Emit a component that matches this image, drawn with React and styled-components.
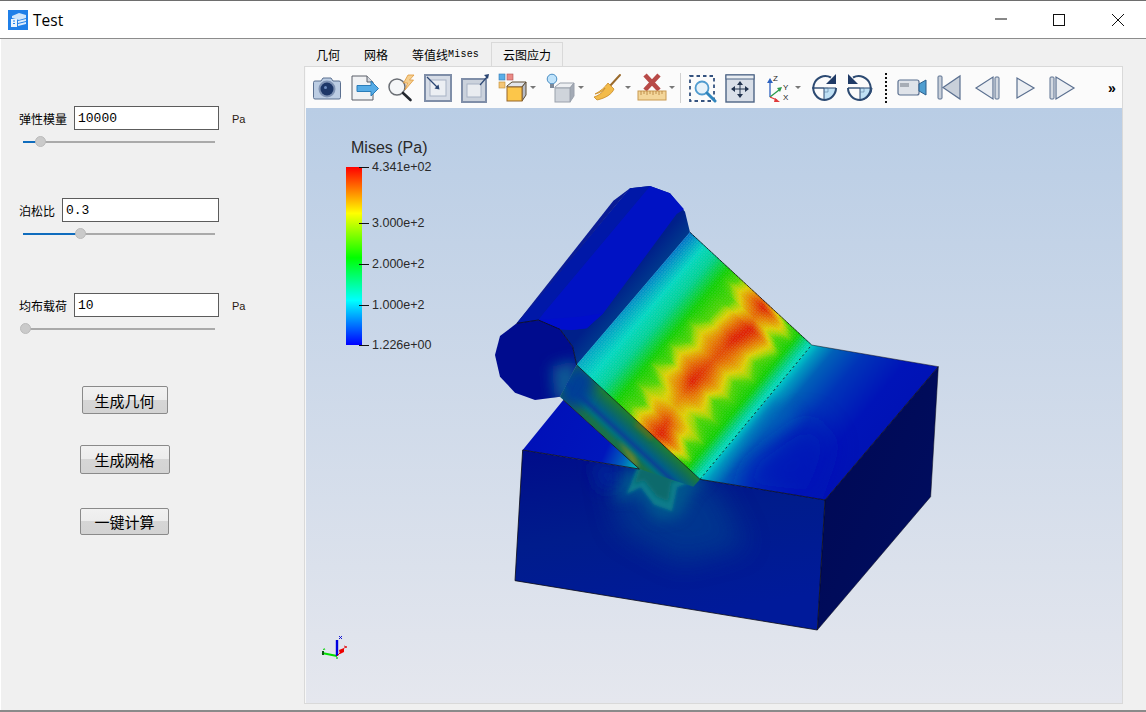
import React from "react";
import styled, { createGlobalStyle } from "styled-components";

const GlobalStyle = createGlobalStyle`
  html, body { margin: 0; padding: 0; background: #f0f0f0; }
  * { box-sizing: border-box; }
`;

const CJK = `"Noto Sans CJK SC", "Liberation Sans", sans-serif`;
const MONO = `"Liberation Mono", "Noto Sans CJK SC", monospace`;

/* colormap + interpolation for the stress field */
const interp = (table, x) => {
  for (let i = 1; i < table.length; i++) {
    if (x <= table[i][0]) {
      const f = (x - table[i - 1][0]) / (table[i][0] - table[i - 1][0]);
      return table[i - 1][1] + f * (table[i][1] - table[i - 1][1]);
    }
  }
  return table[table.length - 1][1];
};

const COLORS = [
  [0, [0, 16, 192]],
  [0.14, [0, 112, 200]],
  [0.27, [0, 216, 192]],
  [0.36, [0, 208, 128]],
  [0.5, [16, 208, 0]],
  [0.62, [144, 216, 0]],
  [0.72, [224, 208, 0]],
  [0.85, [232, 128, 0]],
  [1, [224, 32, 0]],
];

const colorAt = (t) => {
  for (let i = 1; i < COLORS.length; i++) {
    if (t <= COLORS[i][0]) {
      const f = (t - COLORS[i - 1][0]) / (COLORS[i][0] - COLORS[i - 1][0]);
      const a = COLORS[i - 1][1];
      const b = COLORS[i][1];
      return `rgb(${a.map((c, k) => Math.round(c + f * (b[k] - c))).join(",")})`;
    }
  }
  return "rgb(224,32,0)";
};

const PEAK = [[0, 0.88], [0.03, 1], [0.08, 0.9], [0.12, 0.86], [0.17, 1], [0.28, 1], [0.36, 0.94], [0.45, 0.92], [0.55, 0.97], [0.62, 1], [0.72, 0.86], [0.8, 0.78], [0.88, 0.94], [0.96, 1], [1, 0.94]];
const CENTER = [[0, 0.6], [0.03, 0.63], [0.1, 0.62], [0.16, 0.66], [0.28, 0.62], [0.4, 0.61], [0.6, 0.59], [0.75, 0.6], [0.85, 0.62], [0.96, 0.65], [1, 0.63]];
const WIDTH = [[0, 0.19], [0.06, 0.25], [0.12, 0.17], [0.18, 0.22], [0.3, 0.19], [0.38, 0.25], [0.46, 0.18], [0.55, 0.24], [0.62, 0.17], [0.7, 0.25], [0.76, 0.16], [0.84, 0.25], [0.9, 0.17], [0.96, 0.24], [1, 0.2]];

const field = (u, v) => {
  const c = interp(CENTER, v);
  const w = interp(WIDTH, v);
  const pk = interp(PEAK, v);
  const d = Math.abs(u - c);
  if (d < w) return pk - Math.pow(d / w, 1.3) * (pk - 0.56);
  if (u < c) {
    return interp([[0, 0.14 + 0.07 * v], [0.13, 0.28], [0.2, 0.33], [0.32, 0.5], [c - w, 0.56]], u);
  }
  return interp([[c + w, 0.56], [Math.max(0.9, c + w + 0.01), 0.5], [0.98, 0.3], [1.01, 0.26]], u);
};

const A = [630, 187];
const B = [995, 525];
const C = [660, 928];
const D = [290, 585];
const slopePoint = (u, v) =>
  [0, 1].map((k) => (A[k] * (1 - u) + B[k] * u) * (1 - v) + (D[k] * (1 - u) + C[k] * u) * v);

const N = 72;
const slopeCells = [];
for (let i = 0; i < N; i++) {
  for (let j = 0; j < N; j++) {
    const pts = [[i, j], [i + 1, j], [i + 1, j + 1], [i, j + 1]]
      .map(([a, b]) => slopePoint(a / N, b / N).map((n) => n.toFixed(1)).join(","))
      .join(" ");
    slopeCells.push({ pts, fill: colorAt(field((i + 0.5) / N, (j + 0.5) / N)) });
  }
}

const Model = () => (
  <ModelSvg viewBox="0 0 1440 1410">
    <defs>
      <filter id="b4" x="-20%" y="-20%" width="140%" height="140%"><feGaussianBlur stdDeviation="4" /></filter>
      <filter id="b6" x="-30%" y="-30%" width="160%" height="160%"><feGaussianBlur stdDeviation="6" /></filter>
      <filter id="b20" x="-50%" y="-50%" width="200%" height="200%"><feGaussianBlur stdDeviation="20" /></filter>
      <filter id="b40" x="-60%" y="-60%" width="220%" height="220%"><feGaussianBlur stdDeviation="40" /></filter>
      <clipPath id="frontClip"><polygon points="128,840 478,897 660,928 1035,990 1012,1380 105,1232" /></clipPath>
      <clipPath id="topClip"><polygon points="660,928 1035,990 1375,590 995,525" /></clipPath>
      <clipPath id="wedgeClip"><polygon points="240,680 290,585 660,928 640,950 478,897" /></clipPath>
      <clipPath id="discClip"><polygon points="60,498 45,555 60,620 105,668 165,690 240,680 290,585 278,530 240,478 175,450 110,460" /></clipPath>
      <linearGradient id="frontFill" x1="0" y1="0" x2="0.3" y2="1">
        <stop offset="0" stopColor="#000c8a" />
        <stop offset="0.5" stopColor="#001c8c" />
        <stop offset="1" stopColor="#001a9a" />
      </linearGradient>
      <linearGradient id="sideFill" x1="0" y1="0" x2="1" y2="1">
        <stop offset="0" stopColor="#000852" />
        <stop offset="1" stopColor="#000e62" />
      </linearGradient>
      <linearGradient id="topFill" gradientUnits="userSpaceOnUse" x1="825" y1="728" x2="1120" y2="975">
        <stop offset="0" stopColor="#00c8c8" />
        <stop offset="0.06" stopColor="#0098c0" />
        <stop offset="0.16" stopColor="#0060b8" />
        <stop offset="0.36" stopColor="#0034b8" />
        <stop offset="0.65" stopColor="#0014b8" />
        <stop offset="1" stopColor="#0012b4" />
      </linearGradient>
      <linearGradient id="stripFill" gradientUnits="userSpaceOnUse" x1="420" y1="350" x2="470" y2="392">
        <stop offset="0" stopColor="#00208a" />
        <stop offset="1" stopColor="#003e8e" />
      </linearGradient>
      <linearGradient id="wedgeFill" gradientUnits="userSpaceOnUse" x1="252" y1="690" x2="319" y2="617">
        <stop offset="0" stopColor="#14704e" />
        <stop offset="0.12" stopColor="#1a7248" />
        <stop offset="0.28" stopColor="#00707c" />
        <stop offset="0.42" stopColor="#0a4494" />
        <stop offset="0.55" stopColor="#005e88" />
        <stop offset="0.8" stopColor="#106e58" />
        <stop offset="1" stopColor="#1e7c34" />
      </linearGradient>
      <linearGradient id="triFill" gradientUnits="userSpaceOnUse" x1="160" y1="760" x2="470" y2="900">
        <stop offset="0" stopColor="#0010b8" />
        <stop offset="0.68" stopColor="#0016bc" />
        <stop offset="0.86" stopColor="#0064bc" />
        <stop offset="1" stopColor="#00c0b0" />
      </linearGradient>
    </defs>

    {/* box */}
    <polygon points="128,840 1035,990 1012,1380 105,1232" fill="url(#frontFill)" />
    <polygon points="1035,990 1375,590 1352,980 1012,1380" fill="url(#sideFill)" />
    <polygon points="660,928 1035,990 1375,590 995,525" fill="url(#topFill)" />
    <g clipPath="url(#topClip)">
      <polygon points="900,640 990,740 820,860 760,960 1000,990 1060,820" fill="#0018b8" filter="url(#b40)" opacity="0.75" />
      <polygon points="880,680 960,740 800,830 740,900" fill="#0060b8" filter="url(#b20)" opacity="0.55" />
    </g>
    <polygon points="128,840 250,690 478,897" fill="url(#triFill)" />

    <g clipPath="url(#frontClip)">
      <polygon points="380,900 700,930 800,1130 600,1180 420,1080" fill="#004090" filter="url(#b40)" opacity="0.7" />
      <polygon points="330,880 420,890 420,950 360,960" fill="#002498" filter="url(#b20)" />
      <polygon points="440,890 400,990 480,975 530,1050 600,1040 640,960 690,925" fill="#00608e" filter="url(#b20)" opacity="0.8" />
      <polygon points="474,890 440,972 482,952 522,1004 576,1024 592,952 664,925" fill="#0a7c8c" filter="url(#b4)" />
      <polygon points="478,890 462,945 490,930 530,980 565,995 575,935 640,925" fill="#086a6c" filter="url(#b6)" />
    </g>

    {/* roller */}
    <polygon points="110,460 450,55 510,48 570,70 615,125 630,187 290,585 278,530 240,478 175,450" fill="url(#stripFill)" />
    <polygon points="110,460 450,55 510,48 190,430 175,450" fill="#0018a8" />
    <polygon points="110,460 400,92 450,55 130,440" fill="#0a1c96" />
    <polygon points="190,430 510,48 570,70 612,118 590,132 370,430 320,475 275,480 240,478 175,450" fill="#0012c4" />
    <polygon points="175,450 300,440 370,430 320,475 275,480 240,478" fill="#000ecc" />

    <polygon points="60,498 45,555 60,620 105,668 165,690 240,680 290,585 278,530 240,478 175,450 110,460" fill="#000c8e" />
    <g clipPath="url(#discClip)">
      <polygon points="215,590 290,570 290,700 225,690" fill="#0a5a94" filter="url(#b20)" />
    </g>

    {/* wedge under the slope */}
    <polygon points="240,680 290,585 660,928 640,950 478,897" fill="url(#wedgeFill)" />
    <g clipPath="url(#wedgeClip)">
      <polygon points="225,700 285,565 355,625 300,720" fill="#063c96" filter="url(#b20)" />
      <polygon points="415,810 465,858 480,896 452,880" fill="#8c8c20" filter="url(#b6)" opacity="0.7" />
      <polygon points="475,750 525,796 512,810 462,765" fill="#6a6c18" filter="url(#b6)" opacity="0.7" />
    </g>

    {/* contact patch, contour from the field */}
    <g>
      {slopeCells.map((c, i) => (
        <polygon key={i} points={c.pts} fill={c.fill} stroke={c.fill} strokeWidth="1" />
      ))}
    </g>

    {/* feature edges */}
    <g fill="none" stroke="#0a0a14" strokeWidth="2.4">
      <polyline points="128,840 478,897 250,690" />
      <polyline points="660,928 1035,990 1375,590" />
      <polyline points="1035,990 1012,1380 105,1232 128,840" />
      <polyline points="995,525 1375,590 1352,980 1012,1380" strokeWidth="1.5" />
      <polyline points="630,187 995,525" strokeDasharray="10 1" />
      <polyline points="290,585 660,928" />
      <polyline points="110,460 175,450 240,478 278,530 290,585" />
      <line x1="660" y1="928" x2="995" y2="525" strokeDasharray="7 8" />
    </g>
  </ModelSvg>
);

const LEGEND_TICKS = [
  { label: "4.341e+02", y: 0 },
  { label: "3.000e+2", y: 55.5 },
  { label: "2.000e+2", y: 96.5 },
  { label: "1.000e+2", y: 137.5 },
  { label: "1.226e+00", y: 177.5 },
];

const TriadIcon = () => (
  <TriadSvg viewBox="0 0 30 26">
    <path d="M17 22 L2 19" stroke="#00e000" strokeWidth="2" fill="none" />
    <path d="M2 17 v4 h2 v-4 z" fill="#0b5a12" />
    <path d="M3 16 l1.5 -1.5 M5 16 l-1 -1.500" stroke="#00d000" strokeWidth="0.8" />
    <path d="M17 22 V6" stroke="#0000e0" strokeWidth="2.4" fill="none" />
    <path d="M19 5 l3 -3 M19 2 l3 3" stroke="#0000d0" strokeWidth="0.9" />
    <path d="M17 22 l6 -6" stroke="#e00000" strokeWidth="1" fill="none" />
    <path d="M19 16 l5 -2 v4 l-4 2 z" fill="#ee0000" />
    <path d="M24 12 l3 1 l-3 1" stroke="#e00000" strokeWidth="0.8" fill="none" />
    <path d="M17 23 v2" stroke="#00c000" strokeWidth="1.2" />
  </TriadSvg>
);

const AxisLetter = styled.text`
  font: 8px "Liberation Sans", sans-serif;
  fill: #222;
`;

/* toolbar drawings, all in a 30x30 box */
const SL = "#5b7090";
const FR = "#7f8ea8";
const ICONS = {
  camera: (
    <>
      <path d="M3 8 h6 l2 -3 h8 l2 3 h6 a1.500 1.500 0 0 1 1.500 1.500 v15 a1.500 1.500 0 0 1 -1.500 1.500 h-24 a1.500 1.500 0 0 1 -1.500 -1.500 v-15 a1.500 1.500 0 0 1 1.500 -1.500 z" fill="#bccde3" stroke={SL} />
      <circle cx="15" cy="16" r="8.500" fill="#7f93b4" />
      <circle cx="15" cy="16" r="6.500" fill="#1d3768" />
      <circle cx="13.500" cy="14.500" r="1.500" fill="#6d8cc0" />
    </>
  ),
  exportData: (
    <>
      <path d="M3 3 h15 l6 6 v18 h-21 z" fill="#f1f2f4" stroke="#5a5f68" />
      <path d="M18 3 v6 h6" fill="#d3d6dc" stroke="#5a5f68" />
      <path d="M8 12.500 h14 v-4.500 l7.500 7.500 l-7.500 7.500 v-4.500 h-14 z" fill="#55abe6" stroke="#2a7cb8" />
    </>
  ),
  find: (
    <>
      <circle cx="11" cy="14" r="8" fill="#f4f6f8" stroke="#6a6e74" strokeWidth="1.500" />
      <path d="M17 20 l7.500 7" stroke="#23272e" strokeWidth="2.600" strokeLinecap="round" />
      <path d="M22 2 l6 0 l-4.500 5 h4 l-8.500 10 l2.500 -7 h-4 z" fill="#f5cf90" stroke="#e0983a" strokeWidth="0.800" />
    </>
  ),
  zoomIn: (
    <>
      <rect x="2" y="2" width="26" height="26" fill="#d6dce6" stroke={FR} strokeWidth="2" />
      <rect x="7" y="7" width="16" height="16" fill="#eceff3" stroke="#a7b2c4" />
      <path d="M4 4 L15 15" stroke="#2b4673" strokeWidth="1.200" />
      <path d="M16.500 16.500 l-5 -1 l4 -4 z" fill="#2b4673" />
    </>
  ),
  zoomOut: (
    <>
      <rect x="2" y="6" width="24" height="23" fill="#cbd2dc" stroke={FR} strokeWidth="2" />
      <rect x="7" y="11" width="14" height="13" fill="#e9ecf0" stroke="#a7b2c4" />
      <path d="M20 12 L27 4" stroke="#2b4673" strokeWidth="1.200" />
      <path d="M29 1 l-1 5 l-4 -4 z" fill="#2b4673" />
    </>
  ),
  selectCube: (
    <>
      <rect x="1" y="1" width="6" height="6" fill="#5aaee8" stroke="#3478b0" strokeWidth="0.600" />
      <rect x="9" y="1" width="6" height="6" fill="#ea8a86" stroke="#b05050" strokeWidth="0.600" />
      <rect x="1" y="9" width="6" height="6" fill="#f4c678" stroke="#c08a30" strokeWidth="0.600" />
      <path d="M9 13 l5 -4 h14 l-4 5 h-15 z" fill="#e2e5ea" stroke="#5a4a30" />
      <path d="M24 14 l4 -5 v13 l-4 6 z" fill="#b7bcc5" stroke="#5a4a30" />
      <rect x="9" y="14" width="15" height="14" fill="#fcc64a" stroke="#96662a" />
    </>
  ),
  lightCube: (
    <>
      <circle cx="6" cy="6" r="4.800" fill="#bfe3fb" stroke="#4a8dc2" />
      <rect x="4" y="11" width="4" height="4" fill="#7d8a9a" />
      <path d="M9 14 l5 -4 h14 l-4 5 h-15 z" fill="#eef0f3" stroke="#9aa1ac" />
      <path d="M24 15 l4 -5 v13 l-4 6 z" fill="#a3aab5" stroke="#9aa1ac" />
      <rect x="9" y="15" width="15" height="14" fill="#cfd4db" stroke="#9aa1ac" />
    </>
  ),
  broom: (
    <>
      <path d="M27 2 L16 14" stroke="#9a6a2c" strokeWidth="2" strokeLinecap="round" />
      <path d="M15 10 l6 6 c-2 5 -8 9 -17 11 l-3 -3 c6 -2 9 -5 11 -9 c-2 3 -5 5 -10 6 c6 -3 10 -7 13 -11 z" fill="#f3bb4a" stroke="#c88a28" strokeWidth="0.800" />
    </>
  ),
  ruler: (
    <>
      <path d="M8 2 L22 17 M22 2 L8 17" stroke="#b84a48" strokeWidth="4.500" />
      <rect x="1" y="18" width="28" height="9" fill="#f3d69a" stroke="#c99a50" />
      <path d="M4 18 v4 M7 18 v3 M10 18 v4 M13 18 v3 M16 18 v4 M19 18 v3 M22 18 v4 M25 18 v3" stroke="#b27e38" strokeWidth="0.800" />
    </>
  ),
  boxZoom: (
    <>
      <rect x="2" y="3" width="24" height="25" fill="none" stroke="#34527f" strokeWidth="1.800" strokeDasharray="3.500 3" />
      <circle cx="14" cy="15" r="6.500" fill="#e6f2fa" stroke="#4f9bcf" strokeWidth="1.800" />
      <path d="M19 20 l8 8" stroke="#2f85bd" strokeWidth="3" strokeLinecap="round" />
    </>
  ),
  reset: (
    <>
      <rect x="1" y="2" width="28" height="27" fill="#d9dfe8" stroke="#4d6485" strokeWidth="1.400" />
      <rect x="1" y="2" width="28" height="4" fill="#e9edf2" stroke="#4d6485" />
      <path d="M15 9 v15 M7 16 h16" stroke="#23344f" strokeWidth="1" />
      <path d="M15 8 l-3 4 h6 z M15 25 l-3 -4 h6 z M6 16 l4 -3 v6 z M24 16 l-4 -3 v6 z" fill="#23344f" />
    </>
  ),
  axes: (
    <>
      <path d="M7 24 V9" stroke="#2d62c0" strokeWidth="1.300" />
      <path d="M7 5 l-3 5 h6 z" fill="#2d62c0" />
      <path d="M7 24 L16 17" stroke="#2a9a4a" strokeWidth="1.300" />
      <path d="M19 14 l-5 1 l3 4 z" fill="#2a9a4a" />
      <path d="M7 24 L14 27" stroke="#e03a3a" strokeWidth="1.300" />
      <path d="M17 29 l-5 -4 l-1 4 z" fill="#e03a3a" />
      <AxisLetter x="10" y="8">Z</AxisLetter>
      <AxisLetter x="20" y="17">Y</AxisLetter>
      <AxisLetter x="20" y="27">X</AxisLetter>
    </>
  ),
  rotateCw: (
    <>
      <path d="M15 15 h12 a12 12 0 0 1 -12 12 z" fill="#bfe0f4" stroke="#2c4a72" />
      <path d="M15 15 h4 v4 h-4" fill="none" stroke="#5a7ca0" strokeWidth="0.600" />
      <path d="M3 15 h12" stroke="#2c4a72" strokeWidth="1.400" />
      <path d="M22 4.500 A12 12 0 1 0 15 27" fill="none" stroke="#2c4a72" strokeWidth="2" />
      <path d="M27 15 a12 12 0 0 1 -12 12" fill="none" stroke="#2c4a72" strokeWidth="2" />
      <path d="M27 1 v10 h-10 z" fill="#1f3a66" />
    </>
  ),
  rotateCcw: (
    <>
      <path d="M15 15 h12 a12 12 0 0 1 -12 12 z" fill="#bfe0f4" stroke="#2c4a72" />
      <path d="M15 15 h4 v4 h-4" fill="none" stroke="#5a7ca0" strokeWidth="0.600" />
      <path d="M3 15 h12" stroke="#2c4a72" strokeWidth="1.400" />
      <path d="M8 4.500 A12 12 0 1 1 15 27 A12 12 0 0 1 3 15" fill="none" stroke="#2c4a72" strokeWidth="2" />
      <path d="M3 1 v10 h10 z" fill="#1f3a66" />
    </>
  ),
  videoCamera: (
    <>
      <rect x="1" y="7" width="21" height="15" rx="2" fill="#dfe3e9" stroke={SL} strokeWidth="1.200" />
      <rect x="3" y="10" width="9" height="4" fill="#a7adb6" />
      <path d="M22 11 l7 -4 v15 l-7 -4 z" fill="#4f9ed0" stroke="#2d5f8c" />
    </>
  ),
  first: (
    <>
      <rect x="3" y="3" width="4" height="23" rx="1" fill="#c9d0da" stroke={SL} />
      <path d="M25 3 v23 L8 14.500 z" fill="#c9d0da" stroke={SL} strokeWidth="1.200" />
    </>
  ),
  prev: (
    <>
      <path d="M20 4 v22 L3 15 z" fill="#eceff3" stroke={SL} strokeWidth="1.200" />
      <rect x="22" y="4" width="4" height="22" rx="1" fill="#d3d9e1" stroke={SL} />
    </>
  ),
  play: <path d="M7 5 v20 L24 15 z" fill="#eceff3" stroke={SL} strokeWidth="1.200" />,
  next: (
    <>
      <rect x="3" y="4" width="4" height="22" rx="1" fill="#d3d9e1" stroke={SL} />
      <path d="M9 4 v22 L27 15 z" fill="#eceff3" stroke={SL} strokeWidth="1.200" />
    </>
  ),
};

const TOOLS = [
  { icon: "camera", w: 37 },
  { icon: "exportData", w: 37 },
  { icon: "find", w: 37 },
  { icon: "zoomIn", w: 37 },
  { icon: "zoomOut", w: 37 },
  { icon: "selectCube", w: 48, menu: true },
  { icon: "lightCube", w: 48, menu: true },
  { icon: "broom", w: 45, menu: true },
  { icon: "ruler", w: 43, menu: true },
  { sep: "solid" },
  { icon: "boxZoom", w: 38 },
  { icon: "reset", w: 36 },
  { icon: "axes", w: 48, menu: true },
  { icon: "rotateCw", w: 35 },
  { icon: "rotateCcw", w: 38 },
  { sep: "dotted" },
  { icon: "videoCamera", w: 38 },
  { icon: "first", w: 38 },
  { icon: "prev", w: 37 },
  { icon: "play", w: 37 },
  { icon: "next", w: 38 },
];

const FIELDS = [
  { label: "弹性模量", value: "10000", unit: "Pa", pos: 8.9, top: 67 },
  { label: "泊松比", value: "0.3", pos: 29.7, top: 50 },
  { label: "均布载荷", value: "10", unit: "Pa", pos: 0.8, top: 53 },
];

const ACTIONS = [
  { text: "生成几何", w: 86, h: 28, top: 51 },
  { text: "生成网格", w: 90, h: 29, top: 31 },
  { text: "一键计算", w: 89, h: 27, top: 34 },
];

export default function App() {
  return (
    <>
      <GlobalStyle />
      <Window>
        <TitleBar>
          <AppIcon viewBox="0 0 20 20">
            <rect width="20" height="20" fill="#1f7fe8" />
            <path d="M4 6 L11 3 L18 5 V8 L11 10 L4 8 Z" fill="#cfe5fb" />
            <path d="M3 9 h6 v8 h-6 z" fill="#e8f3fd" />
            <path d="M5 11 h2 M5 13.500 h2" stroke="#1f7fe8" />
            <path d="M10 11 l8 -2 v2 l-8 2 z M10 14 l8 -2 v2 l-8 2 z" fill="#ffffff" opacity="0.85" />
          </AppIcon>
          <WindowTitle>Test</WindowTitle>
          <WindowControls>
            <ControlIcon viewBox="0 0 14 14"><path d="M0 6 H12" /></ControlIcon>
            <ControlIcon viewBox="0 0 14 14"><rect x="0.500" y="1.500" width="11" height="11" /></ControlIcon>
            <ControlIcon viewBox="0 0 14 14"><path d="M1 1 L13 13 M13 1 L1 13" /></ControlIcon>
          </WindowControls>
        </TitleBar>

        <Body>
          <SidePanel>
            {FIELDS.map((f) => (
              <Field key={f.label} $top={f.top}>
                <FieldRow>
                  <InputGroup>
                    <FieldLabel>{f.label}</FieldLabel>
                    <ValueInput readOnly value={f.value} />
                  </InputGroup>
                  {f.unit && <Unit>{f.unit}</Unit>}
                </FieldRow>
                <Slider>
                  <SliderFill style={{ width: `${f.pos}%` }} />
                  <SliderThumb style={{ left: `${f.pos}%` }} />
                </Slider>
              </Field>
            ))}
            <Actions>
              {ACTIONS.map((a) => (
                <ActionButton key={a.text} $w={a.w} $h={a.h} $top={a.top}>
                  {a.text}
                </ActionButton>
              ))}
            </Actions>
          </SidePanel>

          <MainColumn>
            <TabBar>
              <Tab>几何</Tab>
              <Tab>网格</Tab>
              <Tab>
                等值线<TabMono>Mises</TabMono>
              </Tab>
              <Tab $active>云图应力</Tab>
            </TabBar>
            <TabPanel>
              <Toolbar>
                {TOOLS.map((t, i) =>
                  t.sep ? (
                    <Separator key={i} $kind={t.sep} />
                  ) : (
                    <ToolButton key={t.icon} $w={t.w}>
                      <ToolIcon viewBox="0 0 30 30">{ICONS[t.icon]}</ToolIcon>
                      {t.menu && <MenuCaret />}
                    </ToolButton>
                  )
                )}
                <Overflow>»</Overflow>
              </Toolbar>
              <Viewport>
                <Legend>
                  <LegendTitle>Mises (Pa)</LegendTitle>
                  <LegendBar>
                    {LEGEND_TICKS.map((t) => (
                      <LegendTick key={t.label} $y={t.y}>
                        <span>{t.label}</span>
                      </LegendTick>
                    ))}
                  </LegendBar>
                </Legend>
                <Model />
                <TriadIcon />
              </Viewport>
            </TabPanel>
          </MainColumn>
        </Body>
      </Window>
    </>
  );
}

const Window = styled.div`
  width: 1146px;
  height: 712px;
  display: flex;
  flex-direction: column;
  overflow: hidden;
  background: #f0f0f0;
  border-top: 1px solid #6e6e6e;
  border-bottom: 2px solid #8a8a8a;
`;

const TitleBar = styled.div`
  height: 38px;
  flex: none;
  display: flex;
  align-items: center;
  padding-left: 8px;
  background: #ffffff;
  border-bottom: 1px solid #8c8c8c;
`;

const AppIcon = styled.svg`
  width: 20px;
  height: 20px;
`;

const WindowTitle = styled.div`
  margin-left: 5px;
  font: 15.500px "Open Sans", "Liberation Sans", sans-serif;
  color: #000;
`;

const WindowControls = styled.div`
  margin-left: auto;
  display: flex;
  align-items: center;
  padding-right: 21px;
  gap: 44px;
`;

const ControlIcon = styled.svg`
  width: 14px;
  height: 14px;
  fill: none;
  stroke: #111;
  stroke-width: 1;
`;

const Body = styled.div`
  flex: 1;
  display: flex;
  min-height: 0;
  border-left: 1px solid #ffffff;
`;

const SidePanel = styled.div`
  width: 303px;
  flex: none;
  display: flex;
  flex-direction: column;
`;

const Field = styled.div`
  margin-top: ${(p) => p.$top}px;
`;

const FieldRow = styled.div`
  display: flex;
  align-items: center;
  padding-left: 18px;
`;

const InputGroup = styled.div`
  width: 200px;
  display: flex;
  align-items: center;
  gap: 7px;
`;

const FieldLabel = styled.label`
  flex: none;
  font: 12px ${CJK};
  color: #000;
`;

const ValueInput = styled.input`
  flex: 1;
  min-width: 0;
  height: 24px;
  padding: 0 3px;
  border: 1px solid #5c5c5c;
  border-radius: 0;
  background: #fff;
  outline: none;
  font: 13px ${MONO};
  color: #000;
`;

const Unit = styled.span`
  margin: 1px 0 0 13px;
  font: 11px "Liberation Sans", sans-serif;
  color: #2a1a10;
`;

const Slider = styled.div`
  position: relative;
  width: 192px;
  height: 2px;
  margin: 11px 0 5px 22px;
  background: #aaaaaa;
`;

const SliderFill = styled.div`
  height: 100%;
  background: #0f6cbd;
`;

const SliderThumb = styled.div`
  position: absolute;
  top: -5px;
  width: 11px;
  height: 11px;
  margin-left: -5px;
  border-radius: 50%;
  background: #cacaca;
  border: 1px solid #bbbbbb;
`;

const Actions = styled.div`
  width: 247px;
  display: flex;
  flex-direction: column;
  align-items: center;
`;

const ActionButton = styled.button`
  width: ${(p) => p.$w}px;
  height: ${(p) => p.$h}px;
  margin-top: ${(p) => p.$top}px;
  padding: 0;
  border: 1px solid #8a8a8a;
  border-radius: 2px;
  background: linear-gradient(#f1f1f1 0%, #ececec 50%, #d6d6d6 50%, #d3d3d3 100%);
  font: 15px ${CJK};
  color: #000;
`;

const MainColumn = styled.div`
  flex: none;
  width: 819px;
  display: flex;
  flex-direction: column;
  padding: 3px 0 6px;
`;

const TabBar = styled.div`
  height: 24px;
  flex: none;
  display: flex;
  align-items: stretch;
`;

const Tab = styled.div`
  display: flex;
  align-items: center;
  padding: 0 ${(p) => (p.$active ? 11 : 12)}px 0;
  font: 12px ${CJK};
  color: #000;
  background: ${(p) => (p.$active ? "#f0f0f0" : "transparent")};
  border: ${(p) => (p.$active ? "1px solid #d9d9d9" : "none")};
  border-bottom: none;
`;

const TabMono = styled.span`
  font: 10px ${MONO};
  letter-spacing: 0.2px;
`;

const TabPanel = styled.div`
  flex: 1;
  min-height: 0;
  display: flex;
  flex-direction: column;
  border: 1px solid #d9d9d9;
  padding-left: 1px;
  background: #f7f7f7;
`;

const Toolbar = styled.div`
  height: 41px;
  flex: none;
  display: flex;
  align-items: center;
  padding-left: 2px;
  background: #fbfbfb;
`;

const ToolButton = styled.div`
  width: ${(p) => p.$w}px;
  flex: none;
  display: flex;
  align-items: center;
  justify-content: center;
  gap: 2px;
`;

const ToolIcon = styled.svg`
  width: 30px;
  height: 30px;
  flex: none;
`;

const MenuCaret = styled.div`
  width: 0;
  height: 0;
  flex: none;
  border-left: 3px solid transparent;
  border-right: 3px solid transparent;
  border-top: 3px solid #777;
`;

const Separator = styled.div`
  flex: none;
  height: 30px;
  margin: ${(p) => (p.$kind === "dotted" ? "0 6px" : "0 3px")};
  border-left: ${(p) => (p.$kind === "dotted" ? "2px dotted #111" : "1px solid #d0d0d0")};
`;

const Overflow = styled.div`
  margin-left: 27px;
  font: bold 14px "Liberation Sans", sans-serif;
  color: #000;
`;

const Viewport = styled.div`
  position: relative;
  flex: 1;
  min-height: 0;
  overflow: hidden;
  background: linear-gradient(#b9cde5, #e5e7ee);
`;

const ModelSvg = styled.svg`
  position: absolute;
  left: 174px;
  top: 62px;
  width: 480px;
  height: 470px;
`;

const TriadSvg = styled.svg`
  position: absolute;
  left: 14px;
  top: 526px;
  width: 30px;
  height: 26px;
`;

const Legend = styled.div`
  position: absolute;
  left: 40px;
  top: 30px;
`;

const LegendTitle = styled.div`
  margin-left: 5px;
  font: 16px "Liberation Sans", sans-serif;
  color: #2a2a2a;
  line-height: 20px;
`;

const LegendBar = styled.div`
  position: relative;
  width: 16px;
  height: 178px;
  margin-top: 9px;
  background: linear-gradient(to top, #0000ff 0%, #00ffff 25%, #00ff00 49%, #ffff00 74%, #ff0000 100%);
`;

const LegendTick = styled.div`
  position: absolute;
  left: 13px;
  top: ${(p) => p.$y}px;
  width: 10px;
  height: 1px;
  background: #111;

  span {
    position: absolute;
    left: 13px;
    top: -8px;
    font: 12.500px/16px "Liberation Sans", sans-serif;
    color: #2a2a2a;
    white-space: nowrap;
  }
`;
